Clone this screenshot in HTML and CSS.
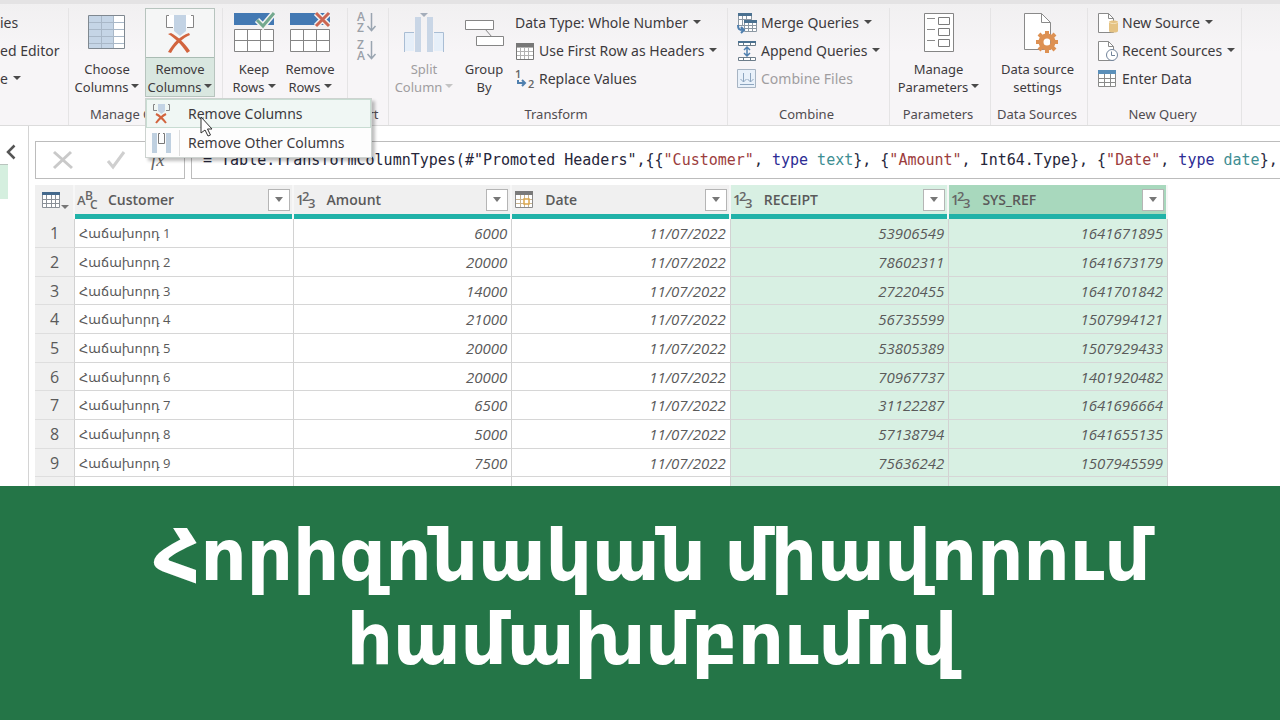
FILE: index.html
```
<!DOCTYPE html>
<html lang="hy">
<head>
<meta charset="utf-8">
<title>Power Query Editor</title>
<link rel="stylesheet" href="styles.css">
</head>
<body>
<main class="workspace">
  <header class="ribbon">
    <section class="group g-query">
      <div class="group-body stack">
        <button class="small">ies</button>
        <button class="small">ed Editor</button>
        <button class="small">e<i class="caret"></i></button>
      </div>
    </section>

    <section class="group g-manage">
      <div class="group-body">
        <button class="big wide">
          <svg width="38" height="40" viewBox="0 0 38 40"><path d="M1 5h36v33H1z" fill="#fff"/><path d="M1 5h25v33H1z" fill="#c5d5e6"/><path d="M1 11.500h36M1 18.500h36M1 25.500h36M1 32.500h36M13.500 5v33M25.500 5v33" stroke="#a9b8c8" fill="none"/><path d="M.5 4.500h36v33H.5z" fill="none" stroke="#7f8890"/></svg>
          <span>Choose<br>Columns<i class="caret"></i></span>
        </button>
        <div class="menu-anchor">
          <button class="big open" aria-expanded="true">
            <svg width="38" height="46" viewBox="0 0 38 46"><path d="M5 5h28v13H5z" fill="#fff"/><path d="M13 5h12v16l-6 5-6-5z" fill="#c3d3e4"/><path d="M8 5.500H5.500v12H12M30 5.500h2.500v12H26" fill="none" stroke="#858585"/><path d="M7 24l3-1c7 4 13 9 19 18l-3 2C20 34 14 28 7 24z" fill="#d2643e"/><path d="M28 23l1 2C22 28 15 34 10 43l-3-1c5-9 12-16 21-19z" fill="#d2643e"/></svg>
            <span>Remove<br>Columns<i class="caret"></i></span>
          </button>
          <div class="menu" role="menu">
            <button class="menu-item hot" role="menuitem">
              <svg width="22" height="24" viewBox="0 0 22 24"><path d="M7 2h7v7l-3.500 3L7 9z" fill="#c3d3e4"/><path d="M4 2.500H2.500v6H6M17 2.500h1.500v6H15" fill="none" stroke="#858585"/><path d="M5 12c4 2 7 5 10 9M15 12c-4 2-7 5-10 9" fill="none" stroke="#d2643e" stroke-width="2"/></svg>
              <span>Remove Columns</span>
            </button>
            <button class="menu-item" role="menuitem">
              <svg width="22" height="24" viewBox="0 0 22 24"><path d="M1 2h5v20H1zM15 2h5v20h-5z" fill="#bfd0e0"/><path d="M9 2.500H7.500v10h6v-10H12" fill="none" stroke="#777"/></svg>
              <span>Remove Other Columns</span>
            </button>
          </div>
          <svg class="pointer" width="14" height="22" viewBox="0 0 14 22"><path d="M1 1v16l4-3 3 6 2.500-1-3-6H12z" fill="#fff" stroke="#333"/></svg>
        </div>
      </div>
      <h2>Manage Columns</h2>
    </section>

    <section class="group g-reduce">
      <div class="group-body">
        <button class="big">
          <svg width="42" height="42" viewBox="0 0 42 42"><path d="M1 2h40v12H1z" fill="#4379b3"/><path d="M1.500 18.500h39v22h-39zM1 29.500h40M14.500 18v22M27.500 18v22" fill="#fff" stroke="#858585"/><path d="M24 9l6 6L41 2" fill="none" stroke="#f3f3f3" stroke-width="6"/><path d="M24 9l6 6L41 2" fill="none" stroke="#74a98e" stroke-width="3"/></svg>
          <span>Keep<br>Rows<i class="caret"></i></span>
        </button>
        <button class="big">
          <svg width="42" height="42" viewBox="0 0 42 42"><path d="M1 2h40v12H1z" fill="#4379b3"/><path d="M1.500 18.500h39v22h-39zM1 29.500h40M14.500 18v22M27.500 18v22" fill="#fff" stroke="#858585"/><path d="M27 2l13 13M40 2L27 15" stroke="#f3f3f3" stroke-width="6"/><path d="M27 2l13 13M40 2L27 15" stroke="#cc6753" stroke-width="3"/></svg>
          <span>Remove<br>Rows<i class="caret"></i></span>
        </button>
      </div>
      <h2>Reduce Rows</h2>
    </section>

    <section class="group g-sort">
      <div class="group-body stack">
        <button class="sort" aria-label="Sort ascending"><svg width="20" height="24" viewBox="0 0 20 24"><g class="letters"><text x="0" y="11">A</text><text x="0" y="22">Z</text></g><path d="M14.500 3v17M10.500 16l4 4.500 4-4.500" fill="none" stroke="#9aa5b1" stroke-width="1.500"/></svg></button>
        <button class="sort" aria-label="Sort descending"><svg width="20" height="24" viewBox="0 0 20 24"><g class="letters"><text x="0" y="11">Z</text><text x="0" y="22">A</text></g><path d="M14.500 3v17M10.500 16l4 4.500 4-4.500" fill="none" stroke="#9aa5b1" stroke-width="1.500"/></svg></button>
      </div>
      <h2>Sort</h2>
    </section>

    <section class="group g-transform">
      <div class="group-body">
        <button class="big mid" disabled>
          <svg width="42" height="42" viewBox="0 0 42 42"><path d="M2 22h9v18H2zM31 22h9v18h-9z" fill="#e6eff9"/><path d="M1.500 41V21.500H11M40.500 41V21.500H31" fill="none" stroke="#a9bdd4"/><path d="M12 6h6v35h-6zM24 6h6v35h-6z" fill="#c9d6e6"/><path d="M17 2h8l-4 4z" fill="#a4adba"/></svg>
          <span>Split<br>Column<i class="caret"></i></span>
        </button>
        <button class="big">
          <svg width="42" height="42" viewBox="0 0 42 42"><path d="M22 18l7 8" stroke="#858585"/><path d="M2.500 9.500h28v9h-28zM13.500 25.500h27v9h-27z" fill="#fff" stroke="#858585"/></svg>
          <span>Group<br>By</span>
        </button>
        <div class="stack">
          <button class="small">Data Type: Whole Number<i class="caret"></i></button>
          <button class="small"><svg width="20" height="20" viewBox="0 0 20 20"><path d="M1.500 2.500h17v16h-17z" fill="#fff"/><path d="M1.500 6.500h17M1.500 10.500h17M1.500 14.500h17M5.500 3v15M9.500 3v15M13.500 3v15" stroke="#b2b2b2"/><path d="M1 2h18v4H1z" fill="#777"/><path d="M1.500 2.500h17v16h-17z" fill="none" stroke="#777"/></svg><span>Use First Row as Headers</span><i class="caret"></i></button>
          <button class="small"><svg width="20" height="20" viewBox="0 0 20 20"><text x="0" y="9" font-size="11">1</text><text x="13" y="19" font-size="11">2</text><path d="M3 11v3h7M7 11l3 3-3 3" fill="none" stroke="#4f7fae" stroke-width="2"/></svg><span>Replace Values</span></button>
        </div>
      </div>
      <h2>Transform</h2>
    </section>

    <section class="group g-combine">
      <div class="group-body stack">
        <button class="small"><svg width="20" height="20" viewBox="0 0 20 20"><path d="M1.500.5h13v12h-13zM1 6.500h13M5.500 2v10M9.500 2v10" fill="#fff" stroke="#8c98a3"/><path d="M1 0h14v3H1z" fill="#4b7190"/><path d="M7.500 7.500h12v11h-12zM7 12.500h13M7 15.500h13M11.500 8v11M15.500 8v11" fill="#fff" stroke="#8c98a3"/><path d="M7 7h13v3H7z" fill="#4b7190"/><path d="M1 12c0 4 1 5 5 5M4 14l3 3-3 3" fill="none" stroke="#4f7fae" stroke-width="2"/></svg><span>Merge Queries</span><i class="caret"></i></button>
        <button class="small"><svg width="20" height="20" viewBox="0 0 20 20"><path d="M1.500 1.500h17v3h-17zM6.500 1v4M13.500 1v4M1.500 16.500h17v3h-17zM6.500 16v4M13.500 16v4" fill="#fff" stroke="#6d7d8a"/><path d="M1 0h18v2H1z" fill="#4b7190"/><path d="M10 6v8M7 9l3-3 3 3M7 12l3 3 3-3" fill="none" stroke="#4f7fae" stroke-width="1.500"/></svg><span>Append Queries</span><i class="caret"></i></button>
        <button class="small" disabled><svg width="20" height="20" viewBox="0 0 20 20"><path d="M.5.5h18v18H.5z" fill="#e9f1fa" stroke="#a7b4c3"/><path d="M6.500 4v9M3.500 10l3 3 3-3M13.500 4v9M10.500 10l3 3 3-3M3 15.500h14" fill="none" stroke="#8da5bf"/></svg><span>Combine Files</span></button>
      </div>
      <h2>Combine</h2>
    </section>

    <section class="group g-params">
      <div class="group-body">
        <button class="big fill">
          <svg width="42" height="42" viewBox="0 0 42 42"><path d="M6.500 2.500h29v38h-29z" fill="#fff" stroke="#858585"/><path d="M20.500 6.500h11v7h-11zM20.500 17.500h11v7h-11zM20.500 28.500h11v7h-11z" fill="none" stroke="#7c7c7c"/><path d="M9 7.500h8M9 18.500h8M9 29.500h8" stroke="#8a8a8a"/></svg>
          <span>Manage<br>Parameters<i class="caret"></i></span>
        </button>
      </div>
      <h2>Parameters</h2>
    </section>

    <section class="group g-sources">
      <div class="group-body">
        <button class="big fill">
          <svg width="42" height="42" viewBox="0 0 42 42"><path d="M7.500 2.500h17l9 9v27h-26z" fill="#fff" stroke="#8a8a8a"/><path d="M24.500 2.500v9h9" fill="none" stroke="#8a8a8a"/><circle cx="30" cy="31" r="6" fill="none" stroke="#dd9153" stroke-width="5"/><path d="M30 20v4M30 38v4M19 31h4M37 31h4M22 23l3 3M35 36l3 3M38 23l-3 3M25 36l-3 3" stroke="#dd9153" stroke-width="4"/></svg>
          <span>Data source<br>settings</span>
        </button>
      </div>
      <h2>Data Sources</h2>
    </section>

    <section class="group g-new">
      <div class="group-body stack">
        <button class="small"><svg width="20" height="20" viewBox="0 0 20 20"><path d="M.5.5h10l5 5v14H.5z" fill="#fff" stroke="#8a8a8a"/><path d="M10.500.5v5h5" fill="none" stroke="#8a8a8a"/><path d="M11 9c0-2 9-2 9 0v9c0 2-9 2-9 0z" fill="#e5c384"/><path d="M11 9c1 2 8 2 9 0" fill="none" stroke="#f5e3bd"/></svg><span>New Source</span><i class="caret"></i></button>
        <button class="small"><svg width="20" height="20" viewBox="0 0 20 20"><path d="M.5.5h10l5 5v14H.5z" fill="#fff" stroke="#8a8a8a"/><path d="M10.500.5v5h5" fill="none" stroke="#8a8a8a"/><circle cx="14" cy="14" r="5.500" fill="#fff" stroke="#71839a"/><path d="M13.500 10.500v4H17" fill="none" stroke="#71839a"/></svg><span>Recent Sources</span><i class="caret"></i></button>
        <button class="small"><svg width="20" height="20" viewBox="0 0 20 20"><path d="M.5 1.500h17v16H.5zM.5 9.500h17M.5 13.500h17M6.500 4v13M12.500 4v13" fill="#fff" stroke="#8a8a8a"/><path d="M0 1h18v4H0z" fill="#5b8fb9"/></svg><span>Enter Data</span></button>
      </div>
      <h2>New Query</h2>
    </section>
  </header>

  <div class="editor">
    <nav class="queries">
      <button class="collapse" aria-label="Expand pane"><svg width="10" height="16" viewBox="0 0 10 16"><path d="M8.500 1.500L2 8l6.500 6.500" fill="none" stroke="#555" stroke-width="2.500"/></svg></button>
      <div class="query-selected"></div>
    </nav>
    <div class="content">
      <div class="formula-row">
        <div class="formula-tools">
          <button aria-label="Cancel"><svg width="20" height="20" viewBox="0 0 20 20"><path d="M1 2l18 16M18 2L1 18" stroke="#c9c9c9" stroke-width="3"/></svg></button>
          <button aria-label="Commit"><svg width="20" height="20" viewBox="0 0 20 20"><path d="M2 11l5 6L18 2" fill="none" stroke="#cfcfcf" stroke-width="3"/></svg></button>
          <button class="fx">fx</button>
        </div>
        <code class="formula">= Table.TransformColumnTypes(#"Promoted Headers",{{<b>"Customer"</b>, <em>type</em> <u>text</u>}, {<b>"Amount"</b>, Int64.Type}, {<b>"Date"</b>, <em>type</em> <u>date</u>},</code>
      </div>

      <table class="grid">
        <colgroup><col class="c-index"><col><col><col><col><col></colgroup>
        <thead>
          <tr>
            <th class="corner"><button class="table-menu" aria-label="Table menu"><svg width="28" height="20" viewBox="0 0 28 20"><path d="M.5 1.500h17v15H.5zM.5 8.500h17M.5 12.500h17M4.500 4v12M9.500 4v12M13.500 4v12" fill="#fff" stroke="#8a9097"/><path d="M0 1h18v3H0z" fill="#44698c"/><path d="M19 14h8l-4 4z" fill="#777"/></svg></button></th>
            <th scope="col"><div class="head"><svg width="24" height="22" viewBox="0 0 24 22"><text x="0" y="16" font-size="13">A</text><text x="8" y="11" font-size="12">B</text><text x="13" y="20" font-size="12">C</text></svg><span>Customer</span><button class="filter" aria-label="Filter Customer"></button></div><div class="bar"></div></th>
            <th scope="col"><div class="head"><svg width="24" height="22" viewBox="0 0 24 22"><text x="0" y="16" font-size="14">1</text><text x="6" y="12" font-size="13">2</text><text x="12" y="19" font-size="13">3</text></svg><span>Amount</span><button class="filter" aria-label="Filter Amount"></button></div><div class="bar"></div></th>
            <th scope="col"><div class="head"><svg width="24" height="20" viewBox="0 0 24 20"><path d="M1.500 1.500h17v16h-17z" fill="#fff" stroke="#8a8a8a"/><path d="M2 9.500h16M2 13.500h16M6.500 5v12M10.500 5v12M14.500 5v12" stroke="#c9b48f"/><path d="M1 1h18v4H1z" fill="#7a7a7a"/><path d="M10 9h5v5h-5z" fill="#fff" stroke="#dba64b" stroke-width="1.500"/></svg><span>Date</span><button class="filter" aria-label="Filter Date"></button></div><div class="bar"></div></th>
            <th scope="col" class="sel"><div class="head"><svg width="24" height="22" viewBox="0 0 24 22"><text x="0" y="16" font-size="14">1</text><text x="6" y="12" font-size="13">2</text><text x="12" y="19" font-size="13">3</text></svg><span>RECEIPT</span><button class="filter" aria-label="Filter RECEIPT"></button></div><div class="bar"></div></th>
            <th scope="col" class="sel current"><div class="head"><svg width="24" height="22" viewBox="0 0 24 22"><text x="0" y="16" font-size="14">1</text><text x="6" y="12" font-size="13">2</text><text x="12" y="19" font-size="13">3</text></svg><span>SYS_REF</span><button class="filter" aria-label="Filter SYS_REF"></button></div><div class="bar"></div></th>
          </tr>
        </thead>
        <tbody>
          <tr><th scope="row">1</th><td>Հաճախորդ 1</td><td>6000</td><td>11/07/2022</td><td>53906549</td><td>1641671895</td></tr>
          <tr><th scope="row">2</th><td>Հաճախորդ 2</td><td>20000</td><td>11/07/2022</td><td>78602311</td><td>1641673179</td></tr>
          <tr><th scope="row">3</th><td>Հաճախորդ 3</td><td>14000</td><td>11/07/2022</td><td>27220455</td><td>1641701842</td></tr>
          <tr><th scope="row">4</th><td>Հաճախորդ 4</td><td>21000</td><td>11/07/2022</td><td>56735599</td><td>1507994121</td></tr>
          <tr><th scope="row">5</th><td>Հաճախորդ 5</td><td>20000</td><td>11/07/2022</td><td>53805389</td><td>1507929433</td></tr>
          <tr><th scope="row">6</th><td>Հաճախորդ 6</td><td>20000</td><td>11/07/2022</td><td>70967737</td><td>1401920482</td></tr>
          <tr><th scope="row">7</th><td>Հաճախորդ 7</td><td>6500</td><td>11/07/2022</td><td>31122287</td><td>1641696664</td></tr>
          <tr><th scope="row">8</th><td>Հաճախորդ 8</td><td>5000</td><td>11/07/2022</td><td>57138794</td><td>1641655135</td></tr>
          <tr><th scope="row">9</th><td>Հաճախորդ 9</td><td>7500</td><td>11/07/2022</td><td>75636242</td><td>1507945599</td></tr>
          <tr><th scope="row"></th><td></td><td></td><td></td><td></td><td></td></tr>
        </tbody>
      </table>
    </div>
  </div>
</main>

<footer class="banner">
  <h1>Հորիզոնական միավորում<br>համախմբումով</h1>
</footer>
</body>
</html>
```
FILE: styles.css
```
* { box-sizing: border-box; }

body {
  margin: 0;
  height: 100vh;
  display: flex;
  flex-direction: column;
  overflow: hidden;
  background: #fff;
  color: #3d3a3d;
  font-family: "Noto Sans", "Open Sans", "DejaVu Sans", sans-serif;
  font-size: 14px;
}

button {
  margin: 0;
  padding: 0;
  border: 0;
  background: none;
  color: inherit;
  font: inherit;
}

svg { display: block; flex: none; overflow: visible; }
svg text { fill: #666; font-family: "Open Sans", sans-serif; font-weight: 600; }

.workspace {
  flex: 1;
  min-height: 0;
  display: flex;
  flex-direction: column;
  overflow: hidden;
}

/* Ribbon */
.ribbon {
  display: flex;
  padding-top: 4px;
  border-top: 4px solid #e4e3e4;
  border-bottom: 1px solid #dcdcdc;
  background: linear-gradient(#f1f0f1, #f7f5f7 40%);
}

.group {
  display: flex;
  flex-direction: column;
  flex: none;
  border-right: 1px solid #e5e4e5;
}

.group h2 {
  margin: 6px 0 0;
  padding-right: 4px;
  font-size: 13px;
  font-weight: 400;
  line-height: 22px;
  text-align: center;
  white-space: nowrap;
  color: #504c50;
}

.group-body { display: flex; height: 89px; }
.stack { display: flex; flex-direction: column; padding-top: 1px; }

.g-query { width: 69px; }
.g-manage { width: 154px; }
.g-reduce { width: 125px; }
.g-reduce .group-body { padding-left: 3px; }
.g-sort { width: 41px; }
.g-sort .group-body { padding: 2px 0 0 9px; gap: 4px; }
.g-transform { width: 339px; }
.g-transform .group-body { padding-left: 3px; }
.g-transform .group-body > .stack { padding-left: 3px; }
.g-combine { width: 162px; }
.g-combine .group-body { padding-left: 9px; }
.g-params { width: 101px; }
.g-sources { width: 97px; }
.g-new { width: 154px; }
.g-new .group-body { padding-left: 10px; }

.big {
  width: 56px;
  height: 89px;
  display: flex;
  flex-direction: column;
  align-items: center;
  justify-content: space-between;
  padding: 3px 0 1px;
  font-size: 13px;
  line-height: 18px;
  white-space: nowrap;
}
.big > span { display: block; width: 100%; text-align: center; }
.wide { width: 76px; }
.mid { width: 64px; }
.fill { width: 100%; padding-right: 3px; }

.open {
  width: 70px;
  padding: 1px 0 0;
  border: 1px solid #b7c4be;
  background: #f5f6f6;
}
.open > span { border-top: 1px solid #a9bcb3; background: #d9e7e0; padding: 2px 0 0; }

.small {
  display: flex;
  align-items: center;
  gap: 4px;
  height: 28px;
  line-height: 18px;
  white-space: nowrap;
}

button:disabled { color: #a09da0; }
button:disabled .caret { border-top-color: #c4c4c4; }

.caret {
  display: inline-block;
  margin-left: 3px;
  border: 4px solid transparent;
  border-top-color: #4a4a4a;
  border-bottom: 0;
  vertical-align: 4px;
}
.small .caret { margin: 0 0 3px 1px; }

.letters text { fill: #9aa0a8; font-size: 12px; }

/* Drop-down menu */
.menu-anchor { position: relative; z-index: 2; }
.menu {
  position: absolute;
  top: 90px;
  left: 0;
  width: 227px;
  border: 1px solid #cdd3d0;
  background: #fdfdfd;
  box-shadow: 3px 3px 3px rgba(0, 0, 0, 0.25);
}
.menu-item {
  display: flex;
  align-items: center;
  width: 100%;
  height: 29px;
  padding-left: 4px;
  border: 1px solid transparent;
  text-align: left;
}
.menu-item span { flex: 1; margin-left: 6px; padding-left: 8px; line-height: 26px; border-left: 1px solid #dedede; }
.menu-item.hot { border-color: #c8dcd2; background: #f0f7f4; }
.menu-item.hot span { border-color: transparent; }
.pointer { position: absolute; top: 108px; left: 55px; }

/* Editor */
.editor { flex: 1; min-height: 0; display: flex; }
.queries { width: 29px; flex: none; border-right: 1px solid #d4d4d4; }
.collapse { display: block; padding: 18px 6px 4px; }
.query-selected { width: 8px; height: 35px; border-top: 1px solid #b9c4be; background: #d5efdf; }
.content { flex: 1; min-width: 0; padding: 15px 0 0 6px; overflow: hidden; }

.formula-row { display: flex; gap: 6px; height: 38px; }
.formula-tools {
  display: flex;
  align-items: center;
  width: 150px;
  padding-left: 17px;
  gap: 33px;
  border: 1px solid #bcbcbc;
  flex: none;
}
.fx { font: italic 19px "Liberation Serif", serif; color: #666; margin-left: -8px; }
.formula {
  flex: 1;
  min-width: 0;
  padding-left: 11px;
  overflow: hidden;
  border: 1px solid #bcbcbc;
  border-right: 0;
  color: #26263a;
  font: 15px/36px "DejaVu Sans Mono", monospace;
  white-space: pre;
}
.formula b { font-weight: 400; color: #9c3d3d; }
.formula em { font-style: normal; color: #2c2c94; }
.formula u { text-decoration: none; color: #3e8e92; }

/* Data grid */
.grid {
  width: 1133px;
  margin-top: 6px;
  table-layout: fixed;
  border-spacing: 0;
  color: #5a5a5a;
  font-family: "Open Sans", "Noto Sans", "DejaVu Sans", sans-serif;
}
.c-index { width: 40px; }
.grid th, .grid td { padding: 0; border-right: 1px solid #d2d2d2; }

thead th { background: #f0f0f0; text-align: left; vertical-align: top; }
.grid thead th { border-right: 2px solid #f7f7f7; }
.head { display: flex; align-items: center; height: 29px; padding: 0 2px; font-size: 14px; font-weight: 600; }
.head span { flex: 1; margin-left: 7px; }
.bar { height: 5px; background: #20b2a8; }
.table-menu { display: block; padding: 6px 0 0 7px; }
.filter {
  display: flex;
  align-items: center;
  justify-content: center;
  width: 22px;
  height: 22px;
  border: 1px solid #b5b5b5;
  background: #fff;
}
.filter::before { content: ""; border: 4px solid transparent; border-top: 5px solid #777; border-bottom: 0; }
.grid .sel { background: #d8f0e3; }
.grid .current { background: #a8d8bd; }

tbody tr { height: 29px; }
tbody tr:nth-child(3n) { height: 28px; }
tbody td { border-bottom: 1px solid #d6d6d6; font-size: 15px; font-style: italic; line-height: 20px; text-align: right; }
.grid td { padding: 0 4px; }
.grid tbody td:nth-child(2) { font-size: 13px; font-style: normal; text-align: left; }
tbody td:nth-child(n+5) { background: #d8f0e3; }
tbody th { border-bottom: 1px solid #dedede; background: #f0f0f0; font-size: 16px; font-weight: 400; line-height: 20px; }

/* Title banner */
.banner { padding: 24px 0 42px 24px; background: #247547; color: #fff; text-align: center; }
.banner h1 { margin: 0; font-size: 72px; font-weight: 700; line-height: 84px; }
```
